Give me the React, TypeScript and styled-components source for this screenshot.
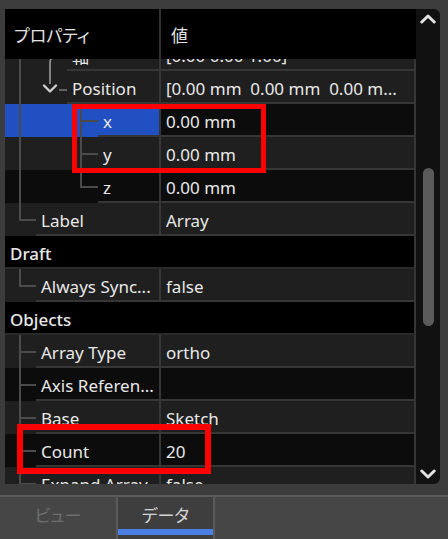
import React, { useLayoutEffect, useRef } from "react";
import styled, { createGlobalStyle } from "styled-components";

const GlobalStyle = createGlobalStyle`
  html, body { margin: 0; padding: 0; background: #3c3c3c; }
  body { font-family: "Noto Sans", "Noto Sans CJK JP", sans-serif; }
  * { box-sizing: border-box; }
`;

const ROW_H = 33;
const INDENT = 31;
const GUIDE_X = [15, 45, 76];
const LINE = "#4b4b4b";

type Guide = "none" | "pipe" | "tee" | "elbow" | "axis" | "position";
type Tone = "light" | "dark";

type RowData =
  | { kind: "group"; label: string }
  | {
      kind: "item";
      label: string;
      value: string;
      level: number;
      guides: Guide[];
      tone: Tone;
      selected?: boolean;
    };

const rows: RowData[] = [
  { kind: "item", label: "軸", value: "[0.00 0.00 1.00]", level: 2, guides: ["pipe", "axis"], tone: "light" },
  { kind: "item", label: "Position", value: "[0.00 mm  0.00 mm  0.00 m...", level: 2, guides: ["pipe", "position"], tone: "light" },
  { kind: "item", label: "x", value: "0.00 mm", level: 3, guides: ["pipe", "none", "tee"], tone: "dark", selected: true },
  { kind: "item", label: "y", value: "0.00 mm", level: 3, guides: ["pipe", "none", "tee"], tone: "light" },
  { kind: "item", label: "z", value: "0.00 mm", level: 3, guides: ["pipe", "none", "elbow"], tone: "dark" },
  { kind: "item", label: "Label", value: "Array", level: 1, guides: ["elbow"], tone: "light" },
  { kind: "group", label: "Draft" },
  { kind: "item", label: "Always Sync...", value: "false", level: 1, guides: ["elbow"], tone: "light" },
  { kind: "group", label: "Objects" },
  { kind: "item", label: "Array Type", value: "ortho", level: 1, guides: ["tee"], tone: "light" },
  { kind: "item", label: "Axis Referen...", value: "", level: 1, guides: ["tee"], tone: "dark" },
  { kind: "item", label: "Base", value: "Sketch", level: 1, guides: ["tee"], tone: "light" },
  { kind: "item", label: "Count", value: "20", level: 1, guides: ["tee"], tone: "dark" },
  { kind: "item", label: "Expand Array", value: "false", level: 1, guides: ["tee"], tone: "light" },
  { kind: "item", label: "Fuse", value: "false", level: 1, guides: ["tee"], tone: "dark" },
  { kind: "item", label: "Interval Axis", value: "[0.00 mm  0.00 mm  0.00 m...", level: 1, guides: ["tee"], tone: "light" },
];

const Page = styled.div`
  position: relative;
  width: 448px;
  height: 539px;
  background: #3c3c3c;
  display: flex;
  flex-direction: column;
  overflow: hidden;
`;

const PanelWrap = styled.div`
  padding: 9px 8px 0 5px;
`;

const Panel = styled.div`
  display: flex;
  height: 475px;
`;

const Table = styled.div`
  width: 411px;
  display: flex;
  flex-direction: column;
`;

const Header = styled.div`
  height: 50px;
  flex: none;
  display: flex;
  background: #000;
  color: #e2e2e2;
  font-family: "Noto Sans CJK JP", "Noto Sans", sans-serif;
  font-feature-settings: "palt";
  font-size: 17px;
`;

const HeaderCell = styled.div<{ $first?: boolean }>`
  display: flex;
  align-items: center;
  ${(p) => (p.$first ? "width: 156px; border-right: 2px solid #303030; padding-left: 9px;" : "flex: 1; padding-left: 10px;")}
`;

const Body = styled.div`
  flex: 1;
  overflow: hidden;
`;

const Row = styled.div<{ $tone: Tone }>`
  display: flex;
  height: ${ROW_H}px;
  background: ${(p) => (p.$tone === "light" ? "#1f1f1f" : "#0c0c0c")};
  color: #e8e8e8;
  font-size: 17px;
`;

const LabelSide = styled.div<{ $selected?: boolean }>`
  width: 156px;
  display: flex;
  background: ${(p) => (p.$selected ? "#2050c2" : "transparent")};
`;

const Branch = styled.div<{ $level: number }>`
  width: ${(p) => p.$level * INDENT}px;
  flex: none;
  svg { display: block; }
`;

const Cell = styled.div<{ $pad: number }>`
  display: flex;
  align-items: center;
  padding: 3px 0 0 ${(p) => p.$pad}px;
  border-bottom: 2px solid #363636;
  border-right: 2px solid #363636;
  white-space: pre;
  overflow: hidden;
`;

const LabelCell = styled(Cell)`
  flex: 1;
  min-width: 0;
`;

const ValueCell = styled(Cell)`
  flex: 1;
  min-width: 0;
`;

const GroupRow = styled.div`
  height: ${ROW_H}px;
  display: flex;
  align-items: center;
  padding: 3px 0 0 5px;
  background: #000;
  color: #e8e8e8;
  font-size: 17px;
  font-weight: 500;
  border-bottom: 2px solid #2a2a2a;
  border-right: 2px solid #363636;
`;

const ScrollBar = styled.div`
  width: 24px;
  background: #111111;
  border-radius: 0 6px 6px 0;
  display: flex;
  flex-direction: column;
  align-items: center;
`;

const ArrowBtn = styled.div`
  height: 20px;
  flex: none;
  display: flex;
  align-items: center;
  justify-content: center;
  svg { display: block; }
`;

const Track = styled.div`
  flex: 1;
  display: flex;
  flex-direction: column;
  align-items: center;
`;

const Thumb = styled.div<{ $offset: number; $size: number }>`
  width: 11px;
  margin-top: ${(p) => p.$offset}px;
  height: ${(p) => p.$size}px;
  border-radius: 6px;
  background: #5b5b5b;
`;

const TabBar = styled.div`
  margin-top: 11px;
  height: 44px;
  border-top: 2px solid #5a5a5a;
  background: #464646;
  display: flex;
  font-family: "Noto Sans CJK JP", "Noto Sans", sans-serif;
  font-feature-settings: "palt";
  font-size: 17px;
`;

const Tab = styled.div<{ $active?: boolean }>`
  width: ${(p) => (p.$active ? 99 : 116)}px;
  display: flex;
  flex-direction: column;
  color: ${(p) => (p.$active ? "#d4d4d4" : "#6e6e6e")};
  background: ${(p) => (p.$active ? "#3e3e3e" : "transparent")};
  ${(p) => (p.$active ? "border-left: 2px solid #5a5a5a; border-right: 2px solid #5a5a5a;" : "")}
`;

const TabLabel = styled.div`
  flex: 1;
  display: flex;
  align-items: center;
  justify-content: center;
  padding-top: 2px;
`;

const TabIndicator = styled.div<{ $active?: boolean }>`
  height: 6px;
  margin-bottom: 4px;
  background: ${(p) => (p.$active ? "#4a80e6" : "transparent")};
`;

const Annotation = styled.div<{ $x: number; $y: number; $w: number; $h: number; $t: number }>`
  position: absolute;
  left: ${(p) => p.$x}px;
  top: ${(p) => p.$y}px;
  width: ${(p) => p.$w}px;
  height: ${(p) => p.$h}px;
  border: ${(p) => p.$t}px solid #ff0000;
  pointer-events: none;
`;

function Guides({ guides, level }: { guides: Guide[]; level: number }) {
  const w = level * INDENT;
  const cy = 17;
  return (
    <svg width={w} height={ROW_H} viewBox={`0 0 ${w} ${ROW_H}`}>
      {guides.map((g, i) => {
        const x = GUIDE_X[i];
        const end = INDENT * (i + 1);
        switch (g) {
          case "pipe":
            return <line key={i} x1={x} y1={0} x2={x} y2={ROW_H} stroke={LINE} strokeWidth={2} />;
          case "tee":
            return (
              <g key={i} stroke={LINE} strokeWidth={2}>
                <line x1={x} y1={0} x2={x} y2={ROW_H} />
                <line x1={x} y1={cy} x2={end} y2={cy} />
              </g>
            );
          case "elbow":
            return (
              <g key={i} stroke={LINE} strokeWidth={2}>
                <line x1={x} y1={0} x2={x} y2={cy + 1} />
                <line x1={x} y1={cy} x2={end} y2={cy} />
              </g>
            );
          case "axis":
            return (
              <path
                key={i}
                d={`M ${x + 4} 19.5 Q ${x} 20 ${x} 24.5 L ${x} ${ROW_H}`}
                fill="none"
                stroke="#8c8c8c"
                strokeWidth={1.8}
              />
            );
          case "position":
            return (
              <g key={i} fill="none">
                <line x1={x} y1={0} x2={x} y2={13} stroke="#8c8c8c" strokeWidth={1.8} />
                <polyline
                  points={`${x - 6},14.5 ${x},20.5 ${x + 6},14.5`}
                  stroke="#cfcfcf"
                  strokeWidth={2.4}
                  strokeLinecap="round"
                  strokeLinejoin="round"
                />
                <line x1={x + 9} y1={19} x2={end} y2={19} stroke="#6a6a6a" strokeWidth={1.8} />
              </g>
            );
          default:
            return null;
        }
      })}
    </svg>
  );
}

function Chevron({ up }: { up?: boolean }) {
  return (
    <svg width={16} height={10} viewBox="0 0 16 10">
      <polyline
        points={up ? "1.8,8 8,2 14.2,8" : "1.8,2 8,8 14.2,2"}
        fill="none"
        stroke="#e2e2e2"
        strokeWidth={3}
        strokeLinecap="round"
        strokeLinejoin="round"
      />
    </svg>
  );
}

export default function App() {
  const bodyRef = useRef<HTMLDivElement>(null);
  useLayoutEffect(() => {
    if (bodyRef.current) bodyRef.current.scrollTop = 21;
  }, []);

  return (
    <Page>
      <GlobalStyle />
      <PanelWrap>
        <Panel>
          <Table>
            <Header>
              <HeaderCell $first>プロパティ</HeaderCell>
              <HeaderCell>値</HeaderCell>
            </Header>
            <Body ref={bodyRef}>
              {rows.map((r, idx) =>
                r.kind === "group" ? (
                  <GroupRow key={idx}>{r.label}</GroupRow>
                ) : (
                  <Row key={idx} $tone={r.tone}>
                    <LabelSide $selected={r.selected}>
                      <Branch $level={r.level}>
                        <Guides guides={r.guides} level={r.level} />
                      </Branch>
                      <LabelCell $pad={5}>{r.label}</LabelCell>
                    </LabelSide>
                    <ValueCell $pad={5}>{r.value}</ValueCell>
                  </Row>
                )
              )}
            </Body>
          </Table>
          <ScrollBar>
            <ArrowBtn>
              <Chevron up />
            </ArrowBtn>
            <Track>
              <Thumb $offset={139} $size={158} />
            </Track>
            <ArrowBtn>
              <Chevron />
            </ArrowBtn>
          </ScrollBar>
        </Panel>
      </PanelWrap>
      <TabBar>
        <Tab>
          <TabLabel>ビュー</TabLabel>
          <TabIndicator />
        </Tab>
        <Tab $active>
          <TabLabel>データ</TabLabel>
          <TabIndicator $active />
        </Tab>
      </TabBar>
      <Annotation $x={72} $y={104} $w={194} $h={69} $t={5} />
      <Annotation $x={17} $y={424} $w={194} $h={50} $t={6} />
    </Page>
  );
}
